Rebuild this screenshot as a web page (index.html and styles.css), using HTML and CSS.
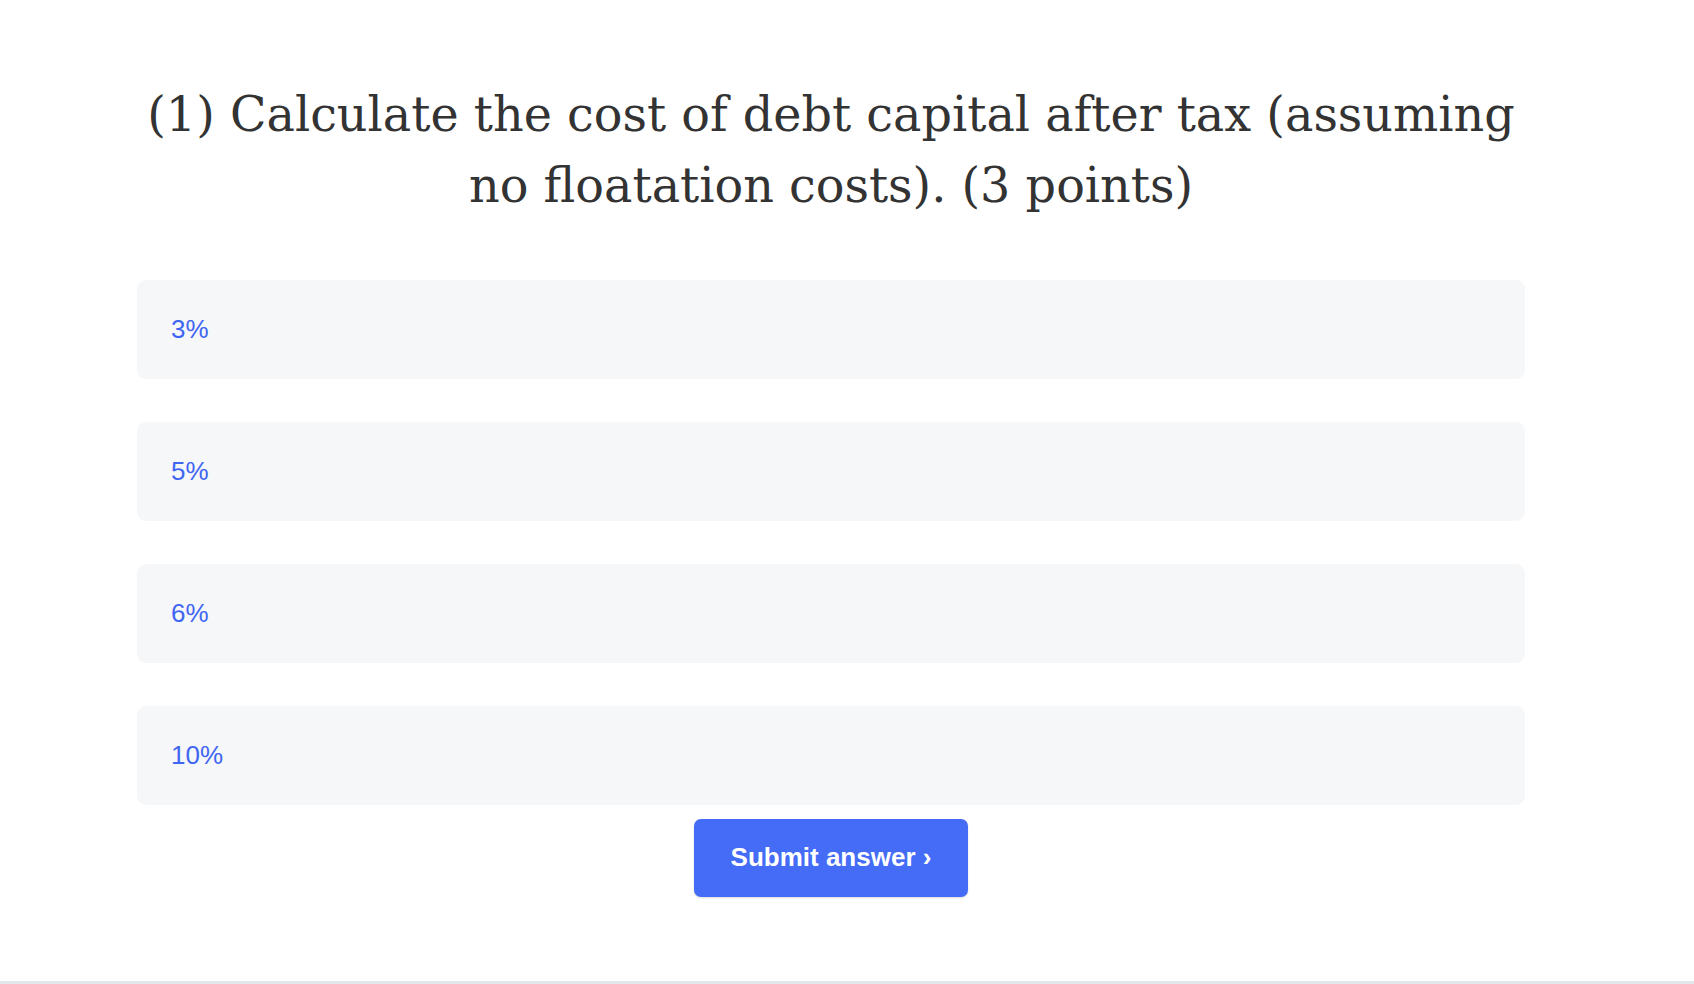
FILE: index.html
```html
<!DOCTYPE html>
<html lang="en">
<head>
<meta charset="utf-8">
<title>Question</title>
<link rel="stylesheet" href="styles.css">
</head>
<body>
<div class="screen">
  <main class="quiz">
    <h1 class="question">(1) Calculate the cost of debt capital after tax (assuming no floatation costs). (3 points)</h1>
    <ul class="options">
      <li class="option">3%</li>
      <li class="option">5%</li>
      <li class="option">6%</li>
      <li class="option">10%</li>
    </ul>
    <div class="actions">
      <button class="submit" type="button">Submit answer ›</button>
    </div>
  </main>
</div>
</body>
</html>
```
FILE: styles.css
```css
html, body {
  margin: 0;
  padding: 0;
  background: #ffffff;
}

.screen {
  min-height: 984px;
  box-sizing: border-box;
  border-bottom: 3px solid #e2e7ec;
}

.quiz {
  margin: 0 169px 0 137px;
  padding-top: 79px;
}

.question {
  margin: 0 -10px 59px;
  font-family: "DejaVu Serif", "Liberation Serif", serif;
  font-weight: normal;
  font-size: 47.7px;
  line-height: 71px;
  color: #333333;
  text-align: center;
}

.options {
  list-style: none;
  margin: 0;
  padding: 0;
  display: flex;
  flex-direction: column;
  gap: 43.5px;
}

.option {
  height: 98.5px;
  box-sizing: border-box;
  padding: 0 34px;
  display: flex;
  align-items: center;
  background: #f6f7f9;
  border-radius: 9px;
  font-family: "Liberation Sans", Arial, sans-serif;
  font-size: 26px;
  color: #3f66f2;
}

.actions {
  display: flex;
  justify-content: center;
  margin-top: 14px;
}

.submit {
  width: 274px;
  height: 78px;
  border: none;
  border-radius: 7px;
  background: #446cf6;
  color: #ffffff;
  font-family: "Liberation Sans", Arial, sans-serif;
  font-weight: bold;
  font-size: 26px;
  box-shadow: 0 1px 2px rgba(0, 0, 0, 0.15);
  cursor: pointer;
}
```
